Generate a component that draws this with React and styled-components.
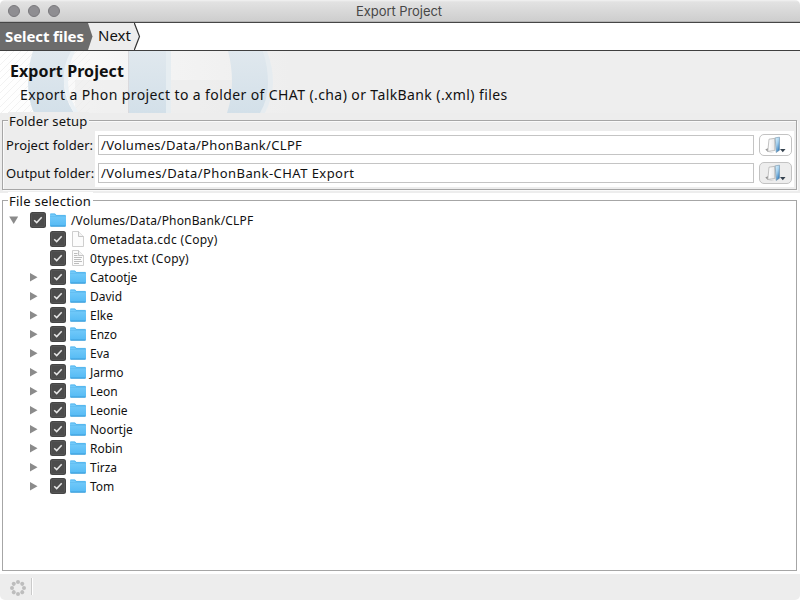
import React from 'react';
import styled, { createGlobalStyle } from 'styled-components';

const GlobalStyle = createGlobalStyle`
  *, *::before, *::after { box-sizing: border-box; }
  body { margin: 0; background: #fff; font-family: "Noto Sans", "Open Sans", sans-serif; color: #111; }
`;

const Window = styled.main`
  width: 800px;
  height: 600px;
  display: flex;
  flex-direction: column;
  overflow: hidden;
  border-radius: 5px;
  background: #fff;
`;

const Text = styled.span`
  font-size: ${(p) => p.$size || 13}px;
  font-weight: ${(p) => (p.$bold ? 700 : 400)};
  letter-spacing: ${(p) => p.$track || 0}px;
  line-height: 18px;
  white-space: pre;
`;

const TitleBar = styled.header`
  display: grid;
  grid-template-columns: 1fr auto 1fr;
  align-items: center;
  height: 23px;
  flex: none;
  background: linear-gradient(#f2f2f2 0, #e2e2e2 2px, #cecece 21px);
  border-bottom: 1px solid #464646;
  box-shadow: inset 0 -1px #b4b4b4;
`;

const Title = styled.h1`
  margin: 0;
  padding-right: 2px;
  font: 400 13px/20px Inter, sans-serif;
  letter-spacing: -0.05px;
  color: #474747;
`;

const Lights = styled.div`
  display: flex;
  gap: 8px;
  padding-left: 8px;
`;

const Light = styled.i`
  width: 12px;
  height: 12px;
  border-radius: 50%;
  background: #8f8e92;
  border: 1px solid #79787c;
`;

const Steps = styled.nav`
  display: flex;
  flex: none;
  height: 28px;
  border-bottom: 1px solid #3f3f3f;
  background: #fff;
`;

const Step = styled.div`
  display: flex;
  align-items: center;
  height: 27px;
  padding-bottom: ${(p) => (p.$active ? 1 : 3)}px;
  padding-left: ${(p) => (p.$active ? 5 : 3)}px;
  width: ${(p) => (p.$active ? 88 : 39)}px;
  color: ${(p) => (p.$active ? '#fff' : '#111')};
  background: ${(p) => (p.$active ? '#6c6c6c' : '#ededed')};
`;

const StepTip = styled.svg`
  flex: none;
  width: 7px;
  height: 27px;
`;

const Banner = styled.section`
  display: grid;
  flex: none;
  height: 62px;
  background: #eeeeee;
  & > * { grid-area: 1 / 1; }
`;

const BannerArt = styled.svg`
  width: 290px;
  height: 62px;
`;

const BannerCopy = styled.div`
  display: flex;
  flex-direction: column;
  padding: 11px 0 0 10px;
  gap: 6px;
  z-index: 1;
  & > :last-child { padding-left: 10px; }
`;

const SetupArea = styled.section`
  flex: none;
  height: 80px;
  background: #ededed;
  padding: 0 2px;
`;

const SelectionArea = styled.section`
  flex: 1;
  padding: 0 2px;
  background: #fff;
`;

const Group = styled.fieldset`
  margin: -1px 0 0;
  padding: 3px 2px 0 3px;
  height: ${(p) => p.$height}px;
  min-width: 0;
  width: 795px;
  border: 1px solid #a6a6a6;
  box-shadow: ${(p) => (p.$etched ? '1px 1px #fafafa, inset 1px 1px #fafafa' : 'none')};
`;

const Legend = styled.legend`
  height: 16px;
  margin-left: 2px;
  padding: 0 2px 0 1px;
  display: flex;
  background: ${(p) => (p.$shaded ? '#ededed' : '#fff')};
`;

const SetupGrid = styled.div`
  display: grid;
  grid-template-columns: 89px 699px;
  height: 56px;
`;

const Labels = styled.div`
  display: flex;
  flex-direction: column;
  gap: 10px;
  padding-top: 5px;
`;

const Fields = styled.div`
  display: flex;
  flex-direction: column;
  gap: 6px;
  background: #fff;
  padding: 3px 2px 0 3px;
`;

const FieldRow = styled.div`
  display: flex;
  align-items: center;
  justify-content: space-between;
  height: 22px;
`;

const PathBox = styled.div`
  width: 656px;
  height: 20px;
  border: 1px solid #c4c4c4;
  padding-left: 2px;
  display: flex;
  align-items: center;
`;

const BrowseButton = styled.button`
  width: 33px;
  height: 22px;
  padding: 0;
  border: 1px solid #c3c3c3;
  border-radius: 5px;
  background: ${(p) => (p.$pressed ? '#ededed' : '#fff')};
  display: flex;
  align-items: center;
  justify-content: center;
`;

const Glyph = styled.svg`
  display: block;
`;

const DisclosureGlyph = styled(Glyph)`
  margin-left: 3px;
`;

const Tree = styled.div`
  display: flex;
  flex-direction: column;
`;

const TreeRow = styled.div`
  display: grid;
  grid-template-columns: 24px 20px ${(p) => (p.$depth ? 20 : 21)}px auto;
  align-items: center;
  height: 19px;
  padding-left: ${(p) => (p.$depth ? 20 : 0)}px;
  & > ${Glyph} { margin-bottom: 1px; }
`;

const StatusBar = styled.footer`
  display: flex;
  align-items: center;
  gap: 5px;
  flex: none;
  height: 26px;
  padding: 1px 0 0 10px;
  background: #ededed;
`;

const Divider = styled.i`
  width: 2px;
  height: 17px;
  margin-top: -2px;
  background: linear-gradient(90deg, #cacaca 50%, #fff 50%);
`;

const FolderIcon = () => (
  <Glyph width="16" height="14" viewBox="0 0 16 14">
    <defs>
      <linearGradient id="folder" x2="0" y2="1">
        <stop stopColor="#78cdfb" />
        <stop offset="1" stopColor="#55baf4" />
      </linearGradient>
    </defs>
    <path d="M0 1.4Q0 .5.9.5h3.8q.6 0 1 .6l.5.8h8.9q.9 0 .9.9v9.8q0 .9-.9.9H.9q-.9 0-.9-.9Z" fill="url(#folder)" />
    <path d="M.4 1h4.5l1 1.4H15.5" fill="none" stroke="#48aee9" strokeWidth=".7" />
    <path d="M0 3.5h16" stroke="#62bdf0" strokeWidth=".8" />
    <path d="M.5 13.1h15" stroke="#3498d4" />
  </Glyph>
);

const FileIcon = ({ lines }) => (
  <Glyph width="16" height="16" viewBox="0 0 16 16">
    <path d="M2.5.5h6l5 5v10h-11Z" fill="#fcfcfc" stroke="#cfcfcf" />
    <path d="M8.5.5v5h5" fill="#f4f4f4" stroke="#bebebe" strokeWidth=".9" />
    {lines && (
      <path d="M4 3.5h3.5M4 5.5h3.5M4 7.5h8M4 9.5h7M4 11.5h8M4 13.5h5" stroke="#b5b5b5" strokeWidth=".9" />
    )}
  </Glyph>
);

const CheckIcon = () => (
  <Glyph width="16" height="16" viewBox="0 0 16 16">
    <rect width="16" height="16" rx="2.5" fill="#454545" />
    <rect x="1.5" y="1.5" width="13" height="13" rx="1" fill="#4c4c4c" stroke="#5c5c5c" strokeWidth=".7" />
    <path d="m4.2 8.2 2.5 2.4 5-5.4" fill="none" stroke="#e8e8e8" strokeWidth="1.5" />
  </Glyph>
);

const Disclosure = ({ open }) => (
  <DisclosureGlyph width="10" height="10" viewBox="0 0 10 10">
    <path d={open ? 'M.2 1.5h9L4.7 9Z' : 'M1 1v8.5l7.5-4.2Z'} fill="#8b8b8b" />
  </DisclosureGlyph>
);

const BrowseIcon = () => (
  <Glyph width="21" height="18" viewBox="0 0 21 18">
    <defs>
      <linearGradient id="door" x2=".7" y2="1">
        <stop stopColor="#e2f4fd" />
        <stop offset=".5" stopColor="#a4d0ee" />
        <stop offset="1" stopColor="#2f78b8" />
      </linearGradient>
      <linearGradient id="page">
        <stop stopColor="#ffffff" />
        <stop offset="1" stopColor="#e9e9e9" />
      </linearGradient>
    </defs>
    <path d="m.3 13.5 3-1.5v3.5l6 1L3 16Z" fill="#777" opacity=".75" />
    <path d="M4 3.2 9.8 2.3v12.2l-7 .9Z" fill="url(#page)" stroke="#b2b2b2" strokeWidth=".8" />
    <path d="m10.2 1.8 4.3-.6v13l-3.3 2.3Z" fill="url(#door)" stroke="#7292aa" strokeWidth=".6" />
    <path d="M15 13h5.5l-2.7 3.2Z" fill="#34414e" />
  </Glyph>
);

const Spinner = () => (
  <Glyph width="16" height="16" viewBox="0 0 16 16">
    {Array.from({ length: 8 }, (_, i) => (
      <circle key={i} cx="8" cy="2" r="2" fill="#bdbdbd" transform={`rotate(${i * 45} 8 8)`} />
    ))}
  </Glyph>
);

const BannerGraphic = () => (
  <BannerArt viewBox="0 0 290 62">
    <defs>
      <pattern id="hatch" width="7" height="7" patternUnits="userSpaceOnUse">
        <path d="M-1 8 8-1" stroke="#f2f2f2" />
      </pattern>
      <linearGradient id="fade">
        <stop stopColor="#fff" />
        <stop offset=".45" stopColor="#f5f5f5" />
        <stop offset="1" stopColor="#eeeeee" />
      </linearGradient>
      <linearGradient id="blue" x2="0" y2="1">
        <stop stopColor="#e0e8ee" />
        <stop offset="1" stopColor="#d3e0e9" />
      </linearGradient>
    </defs>
    <rect width="290" height="62" fill="url(#fade)" />
    <rect width="90" height="62" fill="url(#hatch)" />
    <path d="M75 29h190v33H75Z" fill="#e9e9ea" opacity=".5" />
    <path d="M33 0h39Q64 15 64 31t10 31H34Q28 49 28 32T33 0Z" fill="url(#blue)" />
    <path d="M71 0q-9 16-7 32t10 30h5Q68 47 68 31T75 0Z" fill="#ebf1f5" />
    <path d="M128 0h38v62h-38Z" fill="url(#blue)" />
    <path d="M166 0h5v62h-5Z" fill="#e6edf1" />
    <path d="M128.5 0v62" stroke="#d9d9dd" />
    <path d="M228 0h35q6 15 6 31t-8 31h-34q5-15 5-31T228 0Z" fill="url(#blue)" />
    <path d="M263 0h4q6 16 6 31t-8 31h-5q8-14 8-30t-5-32Z" fill="#e6ecf0" />
  </BannerArt>
);

const FOLDERS = [
  'Catootje', 'David', 'Elke', 'Enzo', 'Eva', 'Jarmo', 'Leon', 'Leonie',
  'Noortje', 'Robin', 'Tirza', 'Tom',
];

const PATHS = [
  { text: '/Volumes/Data/PhonBank/CLPF', track: 0.31 },
  { text: '/Volumes/Data/PhonBank-CHAT Export', track: 0.44, pressed: true },
];

export default function App() {
  return (
    <>
      <GlobalStyle />
      <Window>
        <TitleBar>
          <Lights><Light /><Light /><Light /></Lights>
          <Title>Export Project</Title>
        </TitleBar>
        <Steps>
          <Step $active><Text $size={15} $bold $track={-0.1}>Select files</Text></Step>
          <StepTip viewBox="0 0 7 27">
            <path d="M0 0h7v27H0Z" fill="#ededed" />
            <path d="m0 0 4.5 13.5L0 27Z" fill="#6c6c6c" />
          </StepTip>
          <Step><Text $size={15}>Next</Text></Step>
          <StepTip viewBox="0 0 7 27">
            <path d="m0 0 5.5 13.5L0 27Z" fill="#ededed" />
            <path d="m.3 0 5.2 13.5L.3 27" fill="none" stroke="#333" strokeWidth="1.2" />
          </StepTip>
        </Steps>
        <Banner>
          <BannerGraphic />
          <BannerCopy>
            <Text as="div" $size={16} $bold $track={0.08}>Export Project</Text>
            <Text as="div" $size={14} $track={0.4}>
              Export a Phon project to a folder of CHAT (.cha) or TalkBank (.xml) files
            </Text>
          </BannerCopy>
        </Banner>
        <SetupArea>
          <Group $height={78} $etched>
            <Legend $shaded><Text $track={0.17}>Folder setup</Text></Legend>
            <SetupGrid>
              <Labels>
                <Text $track={0.1}>Project folder:</Text>
                <Text $track={0.1}>Output folder:</Text>
              </Labels>
              <Fields>
                {PATHS.map((p) => (
                  <FieldRow key={p.text}>
                    <PathBox><Text $track={p.track}>{p.text}</Text></PathBox>
                    <BrowseButton $pressed={p.pressed}><BrowseIcon /></BrowseButton>
                  </FieldRow>
                ))}
              </Fields>
            </SetupGrid>
          </Group>
        </SetupArea>
        <SelectionArea>
          <Group $height={379}>
            <Legend><Text $track={0.25}>File selection</Text></Legend>
            <Tree>
              <TreeRow>
                <Disclosure open />
                <CheckIcon />
                <FolderIcon />
                <Text $size={12} $track={0.16}>/Volumes/Data/PhonBank/CLPF</Text>
              </TreeRow>
              <TreeRow $depth={1}>
                <span />
                <CheckIcon />
                <FileIcon />
                <Text $size={12} $track={0.3}>0metadata.cdc (Copy)</Text>
              </TreeRow>
              <TreeRow $depth={1}>
                <span />
                <CheckIcon />
                <FileIcon lines />
                <Text $size={12} $track={0.3}>0types.txt (Copy)</Text>
              </TreeRow>
              {FOLDERS.map((name) => (
                <TreeRow $depth={1} key={name}>
                  <Disclosure />
                  <CheckIcon />
                  <FolderIcon />
                  <Text $size={12}>{name}</Text>
                </TreeRow>
              ))}
            </Tree>
          </Group>
        </SelectionArea>
        <StatusBar>
          <Spinner />
          <Divider />
        </StatusBar>
      </Window>
    </>
  );
}
